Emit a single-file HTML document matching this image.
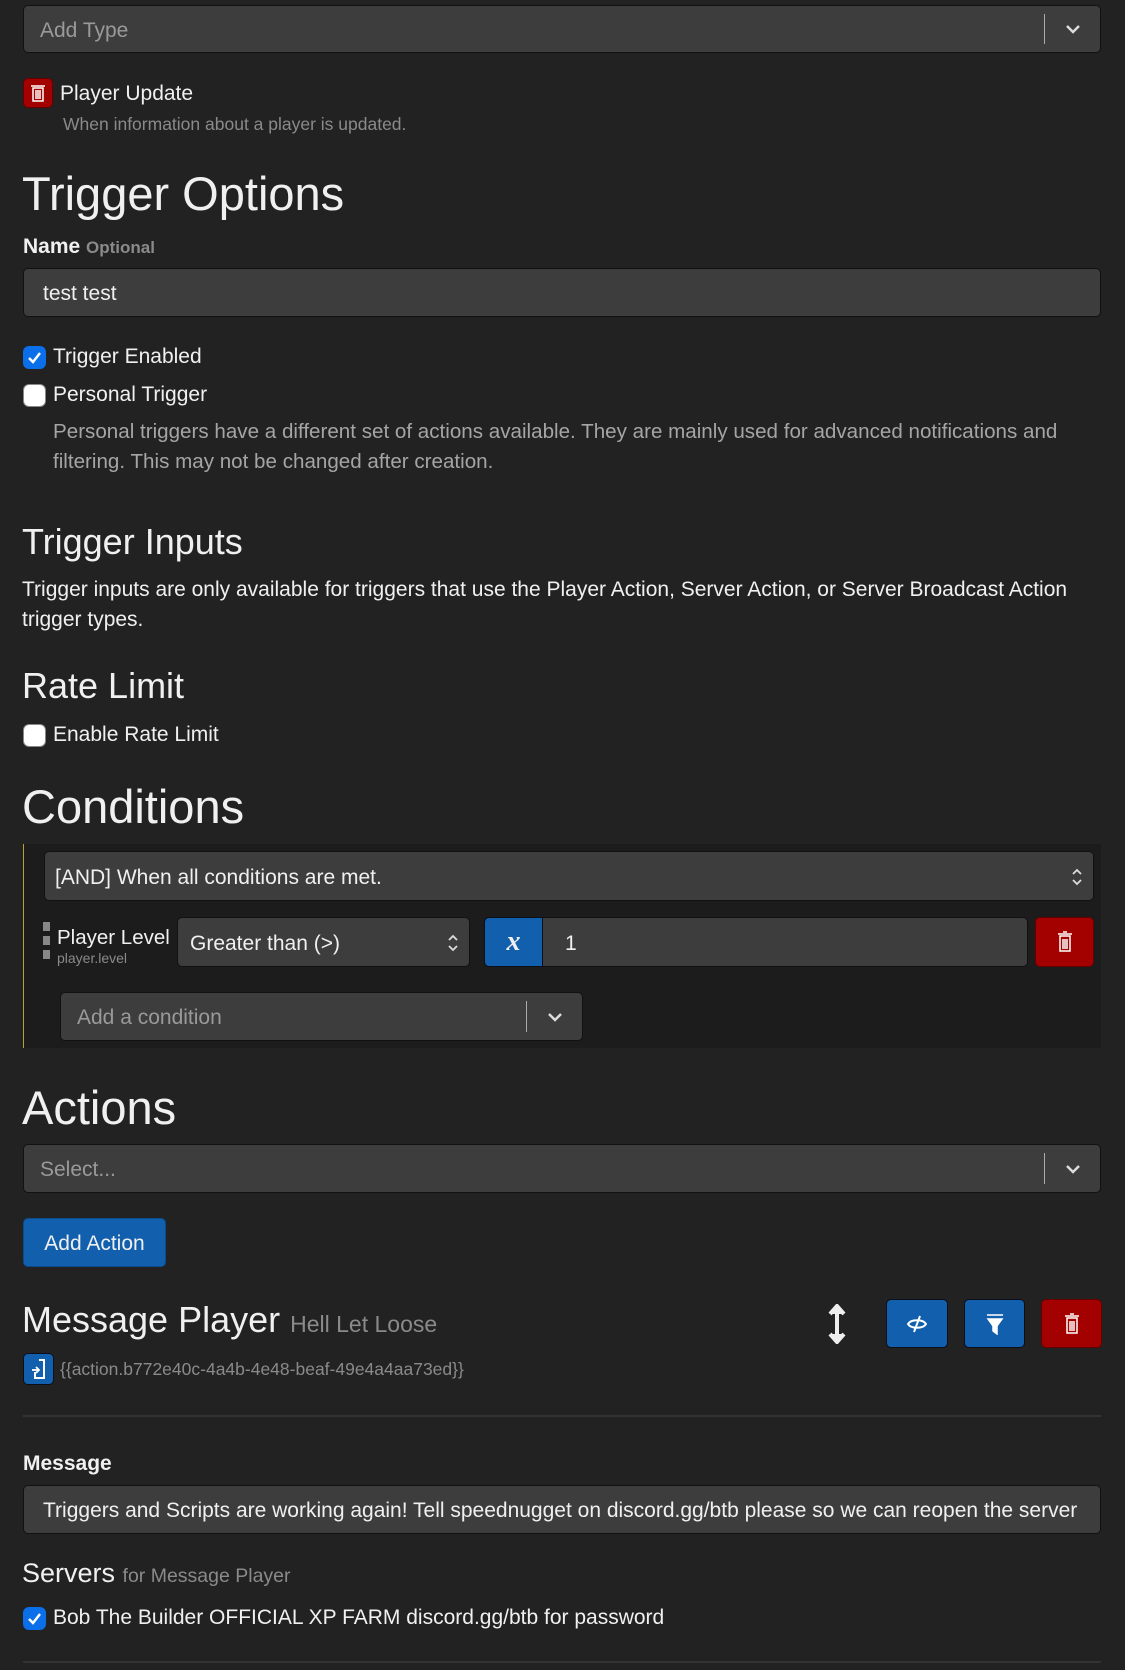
<!DOCTYPE html>
<html><head><meta charset="utf-8"><style>
*{box-sizing:border-box;margin:0;padding:0}
body{width:1125px;height:1670px;background:#222;font-family:"Liberation Sans",sans-serif;color:#f0f0f0;position:relative;overflow:hidden;letter-spacing:0}
.a{position:absolute}
.box{position:absolute;background:#3d3d3d;border:1px solid #111;border-radius:5px;font-size:21px;display:flex;align-items:center;padding-left:16px;padding-top:3px}
.ph{color:#9a9a9a}
.chev{position:absolute;right:0;top:8px;bottom:8px;width:56px;border-left:1px solid #aaa;display:flex;align-items:center;justify-content:center}
.h1{font-size:47px;font-weight:500}
.h2{font-size:36px;font-weight:500}
.t{font-size:21px}
.cb{position:absolute;width:23px;height:23px;border-radius:6px;background:#fff;border:1px solid #888}
.cb.on{background:#0a6fe8;border-color:#0a6fe8}
.btn{position:absolute;border-radius:5px;display:flex;align-items:center;justify-content:center;border:1px solid #0a0f18}
.blue{background:#1260ad}
.red{background:#a30000;border-color:#600}
.gray{color:#8a8a8a}
</style></head><body>
<div class="box ph" style="left:23px;top:5px;width:1078px;height:48px">Add Type<div class="chev"><svg width="18" height="12" viewBox="0 0 18 12"><path d="M3 3l6 6 6-6" stroke="#ddd" stroke-width="2.5" fill="none"/></svg></div></div>
<div class="btn red" style="left:23px;top:78px;width:30px;height:30px"><svg width="16" height="18" viewBox="0 0 16 18"><path d="M1 2h14M3 4h10v13H3zM6 6v9M8 6v9M10 6v9" stroke="#fff" stroke-width="1.5" fill="none"/></svg></div>
<div class="a t" style="left:60px;top:82px;font-size:21px">Player Update</div>
<div class="a gray" style="left:63px;top:114px;font-size:17.5px">When information about a player is updated.</div>
<div class="a h1" style="left:22px;top:166px">Trigger Options</div>
<div class="a" style="left:23px;top:235px;font-size:21px;font-weight:bold">Name <span class="gray" style="font-size:17px">Optional</span></div>
<div class="box" style="left:23px;top:268px;width:1078px;height:49px;padding-left:19px">test test</div>
<div class="cb on" style="left:23px;top:346px"><svg width="21" height="21" viewBox="0 0 21 21"><path d="M5 11l4 4 7-9" stroke="#fff" stroke-width="2.5" fill="none"/></svg></div>
<div class="a t" style="left:53px;top:345px">Trigger Enabled</div>
<div class="cb" style="left:23px;top:384px"></div>
<div class="a t" style="left:53px;top:383px">Personal Trigger</div>
<div class="a gray" style="left:53px;top:417px;font-size:20.6px;line-height:30px;width:1060px;color:#a5a5a5">Personal triggers have a different set of actions available. They are mainly used for advanced notifications and filtering. This may not be changed after creation.</div>
<div class="a h2" style="left:22px;top:521px">Trigger Inputs</div>
<div class="a t" style="left:22px;top:575px;line-height:30px;width:1080px">Trigger inputs are only available for triggers that use the Player Action, Server Action, or Server Broadcast Action trigger types.</div>
<div class="a h2" style="left:22px;top:665px">Rate Limit</div>
<div class="cb" style="left:23px;top:724px"></div>
<div class="a t" style="left:53px;top:723px">Enable Rate Limit</div>
<div class="a h1" style="left:22px;top:779px">Conditions</div>
<div class="a" style="left:23px;top:844px;width:1078px;height:204px;background:#1c1c1c;border-left:1px solid #b5a530"></div>
<div class="box" style="left:44px;top:851px;width:1050px;height:50px;padding-left:10px">[AND] When all conditions are met.<svg class="a" style="right:10px;top:15px" width="12" height="20" viewBox="0 0 12 20"><path d="M2 7l4-4 4 4M2 13l4 4 4-4" stroke="#ddd" stroke-width="1.8" fill="none"/></svg></div>
<div class="a" style="left:43px;top:922px;width:7px;height:40px;background:repeating-linear-gradient(#888 0 9px,transparent 9px 14px)"></div>
<div class="a" style="left:57px;top:926px;font-size:20.5px">Player Level</div>
<div class="a gray" style="left:57px;top:950px;font-size:14px">player.level</div>
<div class="box" style="left:177px;top:917px;width:293px;height:50px;padding-left:12px">Greater than (&gt;)<svg class="a" style="right:10px;top:15px" width="12" height="20" viewBox="0 0 12 20"><path d="M2 7l4-4 4 4M2 13l4 4 4-4" stroke="#ddd" stroke-width="1.8" fill="none"/></svg></div>
<div class="box" style="left:484px;top:917px;width:544px;height:50px;padding-left:80px">1</div>
<div class="btn blue" style="left:484px;top:917px;width:59px;height:50px;border-radius:5px 0 0 5px;font-family:'Liberation Serif',serif;font-style:italic;font-weight:bold;font-size:28px">x</div>
<div class="btn red" style="left:1035px;top:917px;width:59px;height:50px"><svg width="18" height="22" viewBox="0 0 18 22"><path d="M2 3h14M7 1h4M4 5h10v15H4zM7 8v10M9 8v10M11 8v10" stroke="#fff" stroke-width="1.5" fill="none"/></svg></div>
<div class="box ph" style="left:60px;top:992px;width:523px;height:49px">Add a condition<div class="chev"><svg width="18" height="12" viewBox="0 0 18 12"><path d="M3 3l6 6 6-6" stroke="#ddd" stroke-width="2.5" fill="none"/></svg></div></div>
<div class="a h1" style="left:22px;top:1080px">Actions</div>
<div class="box ph" style="left:23px;top:1144px;width:1078px;height:49px">Select...<div class="chev"><svg width="18" height="12" viewBox="0 0 18 12"><path d="M3 3l6 6 6-6" stroke="#ddd" stroke-width="2.5" fill="none"/></svg></div></div>
<div class="btn blue" style="left:23px;top:1218px;width:143px;height:49px;font-size:21px;border-color:#0b4c8c;padding-top:3px">Add Action</div>
<div class="a h2" style="left:22px;top:1299px">Message Player <span class="gray" style="font-size:23px;font-weight:normal">Hell Let Loose</span></div>
<svg class="a" style="left:828px;top:1304px" width="18" height="40" viewBox="0 0 18 40"><path d="M9 4v32M2 10l7-8 7 8M2 30l7 8 7-8" stroke="#eee" stroke-width="4" fill="#eee"/></svg>
<div class="btn blue" style="left:886px;top:1299px;width:62px;height:49px"><svg width="22" height="20" viewBox="0 0 22 20"><path d="M2 10c3-5 15-5 18 0-3 5-15 5-18 0z" stroke="#fff" stroke-width="2" fill="none"/><path d="M14 2L8 18" stroke="#fff" stroke-width="2"/></svg></div>
<div class="btn blue" style="left:964px;top:1299px;width:61px;height:49px"><svg width="18" height="22" viewBox="0 0 18 22"><path d="M1 2h16M2 6h14l-5 7v8l-4-3v-5z" stroke="#fff" stroke-width="1.5" fill="#fff"/></svg></div>
<div class="btn red" style="left:1041px;top:1299px;width:61px;height:49px"><svg width="18" height="22" viewBox="0 0 18 22"><path d="M2 3h14M7 1h4M4 5h10v15H4zM7 8v10M9 8v10M11 8v10" stroke="#fff" stroke-width="1.5" fill="none"/></svg></div>
<div class="btn blue" style="left:23px;top:1353px;width:31px;height:32px"><svg width="16" height="20" viewBox="0 0 16 20"><path d="M8 1h5v18H4v-6" stroke="#fff" stroke-width="2" fill="none"/><path d="M1 11h7M5 8l3 3-3 3" stroke="#fff" stroke-width="1.8" fill="none"/></svg></div>
<div class="a gray" style="left:60px;top:1359px;font-size:17.5px">{{action.b772e40c-4a4b-4e48-beaf-49e4a4aa73ed}}</div>
<div class="a" style="left:23px;top:1415px;width:1078px;height:2px;background:#333"></div>
<div class="a" style="left:23px;top:1452px;font-size:21px;font-weight:bold">Message</div>
<div class="box" style="left:23px;top:1485px;width:1078px;height:49px;padding-left:19px;overflow:hidden;white-space:nowrap">Triggers and Scripts are working again! Tell speednugget on discord.gg/btb please so we can reopen the server</div>
<div class="a" style="left:22px;top:1558px;font-size:27px;font-weight:500">Servers <span class="gray" style="font-size:19.5px;font-weight:normal">for Message Player</span></div>
<div class="cb on" style="left:23px;top:1607px"><svg width="21" height="21" viewBox="0 0 21 21"><path d="M5 11l4 4 7-9" stroke="#fff" stroke-width="2.5" fill="none"/></svg></div>
<div class="a t" style="left:53px;top:1606px">Bob The Builder OFFICIAL XP FARM discord.gg/btb for password</div>
<div class="a" style="left:23px;top:1661px;width:1078px;height:2px;background:#333"></div>
</body></html>
